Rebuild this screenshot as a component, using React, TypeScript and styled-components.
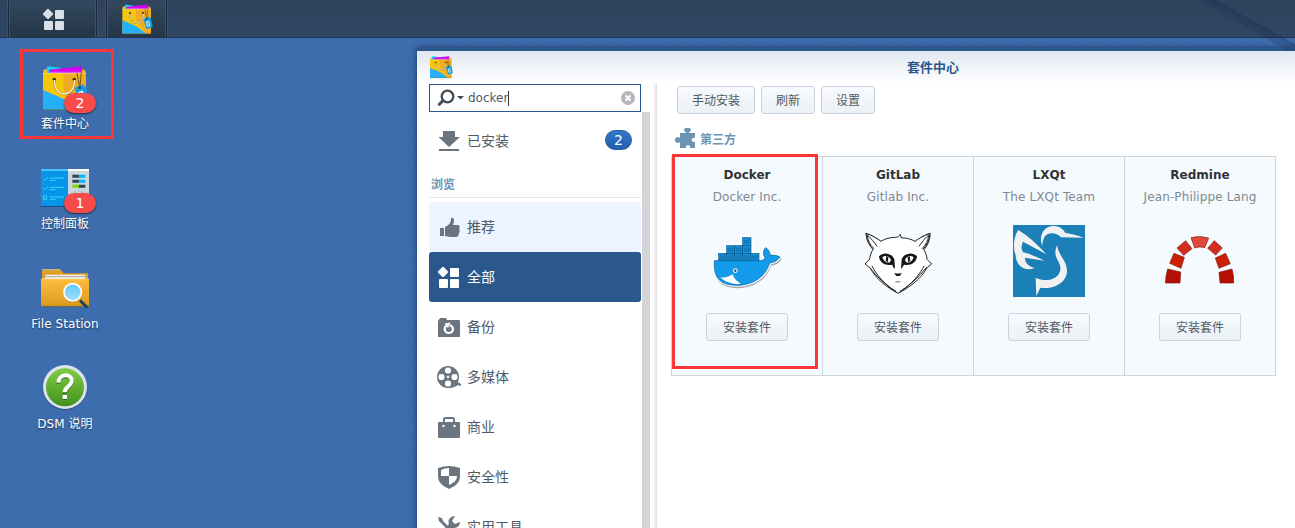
import React from "react";
import styled, { createGlobalStyle } from "styled-components";

const GlobalStyle = createGlobalStyle`
  * { box-sizing: border-box; }
  html, body { margin: 0; padding: 0; overflow: hidden; }
  body { font-family: "DejaVu Sans", "Noto Sans CJK SC", sans-serif; font-size: 12px; }
  svg { display: block; flex: none; }
`;

const Screen = styled.div`
  position: relative;
  width: 1295px;
  height: 528px;
  overflow: hidden;
  display: flex;
  flex-direction: column;
  background-color: #3f6fb0;
  background-image:
    repeating-linear-gradient(45deg, rgba(20, 50, 100, 0.05) 0 1px, transparent 1px 3px),
    repeating-linear-gradient(-45deg, rgba(20, 50, 100, 0.05) 0 1px, transparent 1px 3px);
`;

const Streak = styled.svg`
  position: absolute;
  top: 0;
  right: 0;
`;

const Taskbar = styled.header`
  position: relative;
  flex: none;
  height: 38px;
  padding-left: 8px;
  display: flex;
  gap: 9px;
  background: linear-gradient(#2e425c, #2f4763);
  border-bottom: 1px solid #24364f;
`;

const TaskButton = styled.div<{ $width: number; $shift?: number }>`
  width: ${(p) => p.$width}px;
  height: 37px;
  padding-left: ${(p) => p.$shift ?? 0}px;
  display: flex;
  align-items: center;
  justify-content: center;
  background: linear-gradient(#33485f, #243648);
  border: solid #1b2a3b;
  border-width: 0 1px;
  box-shadow: inset 1px 0 #3d5268, inset -1px 0 #3d5268, 1px 0 #3d5268, -1px 0 #3d5268;
`;

const Workspace = styled.main`
  flex: 1;
  min-height: 0;
  display: flex;
`;

const Desktop = styled.nav`
  flex: none;
  width: 417px;
  padding: 11px 0 0 20px;
  display: flex;
  flex-direction: column;
`;

const Shortcut = styled.div<{ $marked?: boolean }>`
  width: 94px;
  height: 90px;
  margin-bottom: 10px;
  padding-top: 12px;
  display: flex;
  flex-direction: column;
  align-items: center;
  border: 3px solid ${(p) => (p.$marked ? "#fb3638" : "transparent")};
  margin-right: auto;
`;

const ShortcutIcon = styled.div`
  position: relative;
  margin-left: -4px;
`;

const ShortcutLabel = styled.span`
  margin: 4px 0 0 -4px;
  line-height: 16px;
  letter-spacing: 0.06px;
  color: #fff;
  white-space: nowrap;
  text-shadow: 0 1px 2px rgba(0, 0, 0, 0.55);
`;

const Alert = styled.span`
  position: absolute;
  left: 23px;
  top: 29px;
  width: 32px;
  height: 20px;
  border-radius: 10px;
  background: #fa4b4b;
  color: #fff;
  font-size: 14px;
  line-height: 20px;
  text-align: center;
  box-shadow: 0 1px 2px rgba(0, 0, 0, 0.6);
`;

const Window = styled.section`
  flex: none;
  width: 1032px;
  height: 490px;
  margin-top: 10px;
  display: flex;
  flex-direction: column;
  background: #fff linear-gradient(#e0e7f1, #fff) 0 3px / 100% 32px no-repeat;
  border-top: 3px solid #2a588c;
  background-origin: border-box;
  box-shadow: 0 0 6px rgba(0, 15, 50, 0.65);
`;

const TitleBar = styled.div`
  flex: none;
  height: 33px;
  padding: 4px 12px 0;
  display: flex;
`;

const Title = styled.h1`
  flex: 1;
  margin: 0 24px 0 0;
  font-size: 13px;
  line-height: 25px;
  text-align: center;
  color: #2a588c;
`;

const Columns = styled.div`
  flex: 1;
  min-height: 0;
  display: flex;
`;

const Sidebar = styled.aside`
  flex: none;
  width: 212px;
  margin-left: 12px;
  display: flex;
  flex-direction: column;
`;

const Search = styled.div`
  flex: none;
  height: 28px;
  padding: 0 5px 0 7px;
  display: flex;
  align-items: center;
  border: 1px solid #2a588c;
  background: #fff;
  color: #505a64;
`;

const Query = styled.span`
  border-right: 1px solid #333;
  margin-left: 4px;
  line-height: 15px;
`;

const Clear = styled.span`
  margin-left: auto;
  display: flex;
`;

const Item = styled.div<{ $state?: "hover" | "active" }>`
  flex: none;
  height: 50px;
  padding: 0 9px 0 8px;
  display: flex;
  align-items: center;
  gap: 6px;
  border-radius: 3px;
  font-size: 14px;
  background: ${(p) => (p.$state === "active" ? "#2a588c" : p.$state === "hover" ? "#ecf5ff" : "transparent")};
  color: ${(p) => (p.$state === "active" ? "#fff" : "#505a64")};
`;

const ItemLabel = styled.span`
  padding-bottom: 2px;
`;

const InstalledItem = styled(Item)`
  margin-top: 3px;

  ${ItemLabel} {
    padding-bottom: 0;
  }
`;

const Count = styled.span`
  margin-left: auto;
  width: 27px;
  height: 20px;
  border-radius: 10px;
  background: linear-gradient(#3277c8, #245fae);
  border: 1px solid #2460a8;
  color: #fff;
  font-size: 14px;
  line-height: 18px;
  text-align: center;
`;

const Group = styled.h2`
  flex: none;
  height: 33px;
  margin: 0 0 4px;
  padding: 8px 0 0 2px;
  font-size: 12px;
  line-height: 24px;
  color: #6c94b2;
  border-bottom: 1px solid #e4e9ee;
`;

const Scrollbar = styled.div`
  flex: none;
  width: 8px;
  margin: 28px 0 0 1px;
  background: #d3d4d6;
`;

const Divider = styled.div`
  flex: none;
  width: 5px;
  margin-left: 3px;
  background: linear-gradient(90deg, #fff, #dedfe1 75%, #fff 80%);
`;

const Content = styled.div`
  flex: none;
  width: 605px;
  margin-left: 13px;
  padding-top: 2px;
`;

const Toolbar = styled.div`
  display: flex;
  gap: 6px;
  padding-left: 6px;
`;

const Button = styled.button<{ $width: number }>`
  width: ${(p) => p.$width}px;
  height: 28px;
  padding: 0 0 1px;
  border: 1px solid #c8d3df;
  border-radius: 3px;
  background: linear-gradient(#f7fafe, #ecf1f6);
  color: #505a64;
  font: inherit;
`;

const Category = styled.h2`
  height: 20px;
  margin: 14px 0 8px 4px;
  display: flex;
  align-items: center;
  gap: 5px;
  font-size: 12px;
  font-weight: 700;
  color: #6c94b2;
`;

const Grid = styled.div`
  position: relative;
  display: grid;
  grid-template-columns: repeat(4, 151px);
  height: 220px;
  border: solid #d0d5da;
  border-width: 1px 0 1px 1px;
`;

const Card = styled.article`
  display: flex;
  flex-direction: column;
  align-items: center;
  background: #f5faff;
  border-right: 1px solid #d0d5da;
`;

const Name = styled.h3`
  margin: 9px 0 0;
  font-size: 12px;
  line-height: 18px;
  color: #333;
`;

const Vendor = styled.p`
  margin: 4px 0 19px;
  line-height: 18px;
  letter-spacing: 0.12px;
  color: #808890;
  white-space: nowrap;
`;

const Install = styled(Button)`
  margin-top: 16px;
`;

const Highlight = styled.div`
  position: absolute;
  left: 0;
  top: -3px;
  width: 146px;
  height: 215px;
  border: 3px solid #fb3638;
`;

const grey = "#6b7580";

function Bag({ size }: { size: number }) {
  return (
    <svg width={size} height={size} viewBox="123 192 144 144">
      <path d="M131 209l8-2 9 14h-19z" fill="#eec22c" />
      <path d="M143 199l40 5-3 18h-36l-4-14z" fill="#14d4f0" />
      <path d="M148 209l97-10v25h-97z" fill="#d400f5" />
      <path d="M148 215h97v6h-97z" fill="#e8e0f4" opacity=".4" />
      <path d="M246 208l9 2 3 12h-12z" fill="#e9b331" />
      <path d="M129 220h129v110H129z" fill="#f5c60a" />
      <path d="M190 220h68v110h-20l-48-60z" fill="#f0aa25" />
      <path d="M129 270v60h109l-48-34z" fill="#25b0fb" />
      <path d="M129 221h129" stroke="#ffe46a" strokeWidth="2" />
      <path d="M129 329h129" stroke="#7d6c25" strokeWidth="2" />
      <circle cx="163" cy="238" r="5" fill="#352a10" />
      <circle cx="223" cy="238" r="5" fill="#352a10" />
      <path d="M163 242c-1 53 61 55 61 0" fill="none" stroke="#806020" strokeWidth="6" />
      <path d="M163 240c-1 55 61 57 61 0" fill="none" stroke="#fff4c8" strokeWidth="4.500" />
      <path d="M231 219l8 45M244 219l-5 45" stroke="#765711" strokeWidth="3" />
      <path d="M224 264l22-11 12 9 8 38-28 9z" fill="#109ee1" />
      <path d="M238 277l9-3 5 20-10 2z" fill="none" stroke="#fff" strokeWidth="4" />
      <circle cx="239" cy="263" r="4" fill="#173f52" />
    </svg>
  );
}

function ControlPanel() {
  return (
    <svg width="48" height="48" viewBox="0 -6 144 144">
      <path d="M0 117h80l64-4v6L80 123H0z" fill="#193b60" opacity=".7" />
      <path d="M80 9h64v108H80z" fill="#cbd6df" />
      <path d="M80 9h64v6H80z" fill="#fff" />
      <path d="M0 9h81v111H0z" fill="#0795e8" />
      <path d="M0 9h81v6H0z" fill="#45c4ff" />
      <path d="M7 38l5 5 9-10M7 66l5 5 9-10M7 90h10v10H7zM26 36h43M26 43h18M26 64h43M26 71h18M26 93h43M26 100h18" fill="none" stroke="#3fd4fa" strokeWidth="3" />
      <path d="M94 26h20v9H94zM94 41h20v9H94zM112 56h21v9h-21z" fill="#334450" />
      <path d="M113 26h20v9h-20zM113 41h20v9h-20z" fill="#00b8f2" />
      <path d="M94 56h20v9H94z" fill="#78da00" />
      <path d="M101 78h4M112 75h3M122 78h4" stroke="#84919a" strokeWidth="3" />
    </svg>
  );
}

function FileFolder() {
  return (
    <svg width="48" height="48" viewBox="0 -3 144 144">
      <defs>
        <linearGradient id="folder" x2="0" y2="1"><stop stopColor="#fdbd3e" /><stop offset="1" stopColor="#dc991e" /></linearGradient>
        <linearGradient id="glass" x2="0" y2="1"><stop stopColor="#62c9fa" /><stop offset="1" stopColor="#a1e0ff" /></linearGradient>
      </defs>
      <path d="M3 17l3-4h51l11 12h73v25H3z" fill="#dfa026" />
      <path d="M4 14h53" stroke="#c5ba91" strokeWidth="3" />
      <path d="M13 29h120v18H9z" fill="#f4f4f0" />
      <path d="M10 35h124" stroke="#7f7a70" strokeWidth="2" />
      <path d="M0 42h144v82H0z" fill="url(#folder)" />
      <path d="M0 42h144" stroke="#ffd47a" strokeWidth="2" />
      <path d="M0 124h144" stroke="#765d2a" strokeWidth="2" />
      <path d="M117 106l22 22" stroke="#194659" strokeWidth="9" />
      <circle cx="96" cy="84" r="28" fill="#9b701e" opacity=".45" />
      <circle cx="95" cy="82" r="26" fill="url(#glass)" stroke="#fff" strokeWidth="5" />
    </svg>
  );
}

function Help() {
  return (
    <svg width="48" height="48" viewBox="0 2 144 144">
      <defs><linearGradient id="help" x2="0" y2="1"><stop stopColor="#83cb46" /><stop offset="1" stopColor="#41921d" /></linearGradient></defs>
      <circle cx="72" cy="74" r="66" fill="#1c3962" opacity=".7" />
      <circle cx="72" cy="71" r="66" fill="#dce3ee" />
      <circle cx="72" cy="72" r="57" fill="url(#help)" />
      <path d="M52 61c2-29 41-28 40-5-1 17-21 17-21 35M65 104h13" fill="none" stroke="#27651b" strokeWidth="12" />
      <path d="M52 58c2-29 41-28 40-5-1 17-21 17-21 34M65 101h13" fill="none" stroke="#fff" strokeWidth="12" />
    </svg>
  );
}

function Tiles({ size = 24, fill = "#fff" }: { size?: number; fill?: string }) {
  return (
    <svg width={size} height={size} viewBox="0 0 24 24" fill={fill}>
      <rect x="2" y="3" width="8" height="8" rx="1.2" transform="rotate(45 6 7)" />
      <rect x="13" y="3" width="9" height="9" rx="1" />
      <rect x="2" y="14" width="9" height="9" rx="1" />
      <rect x="13" y="14" width="9" height="9" rx="1" />
    </svg>
  );
}

type SideIconName = "download" | "thumb" | "tiles" | "backup" | "film" | "case" | "shield" | "tools";

function SideIcon({ name }: { name: SideIconName }) {
  if (name === "tiles") return <Tiles />;
  return (
    <svg width="24" height="24" viewBox="0 0 24 24" fill={grey}>
      {name === "download" && <path d="M6 3h12v6h5L12 19 1.500 9H6zM2 21h20v2H2z" />}
      {name === "thumb" && <path d="M3 13h4v8H3zM8 12c4-2 6-4 6-9 3-1 4 2 2 7h5c2 0 2 3 1 4 1 1 1 3 0 4 0 2-1 4-3 4h-6c-2 0-3-1-5-1z" />}
      {name === "backup" && (
        <>
          <path d="M1 6l2-3h6l1 2h12c1 0 1 1 1 2v15H1z" />
          <path d="M9.300 10.500c-4 4 0 8 3 7.500 4-.5 5.500-6 .5-7.800" fill="none" stroke="#fff" strokeWidth="2.100" />
          <path d="M7.500 8.500l6-1-2.500 5.500z" fill="#fff" />
        </>
      )}
      {name === "film" && (
        <>
          <path d="M17 19l4-2 3 2v2l-3-1c-3 2-5 3-10 3z" />
          <circle cx="11" cy="12" r="11" />
          <g fill="#fff"><circle cx="11" cy="5.500" r="3.100" /><circle cx="11" cy="18.500" r="3.100" /><circle cx="4.500" cy="12" r="3.100" /><circle cx="17.500" cy="12" r="3.100" /><circle cx="11" cy="12" r="1.200" /></g>
        </>
      )}
      {name === "case" && (
        <>
          <path d="M6 7V4c0-1 1-2 2-2h8c1 0 2 1 2 2v3h-2V4H8v3z" />
          <rect x="1" y="7" width="22" height="16" rx="1" />
          <g fill="#fff"><circle cx="6.5" cy="11" r="1.2" /><circle cx="17.5" cy="11" r="1.2" /></g>
        </>
      )}
      {name === "shield" && (
        <>
          <path d="M1 3q11-4 22 0v8c0 7-5 10-11 13C6 21 1 18 1 11z" />
          <path d="M4 5q4-2 8-2v8H4zM12 11h8c0 5-4 7-8 9z" fill="#fff" />
        </>
      )}
      {name === "tools" && (
        <>
          <path d="M1 2l4 1 1 3 5 5-2 2-5-5-2-2z" />
          <path d="M23 7l-5 2-3-3 3-5c-4 0-8 4-6 8L2 19l4 4L16 13c4 0 7-2 7-6z" />
          <path d="M14 14l3-2 6 8-4 4z" />
        </>
      )}
    </svg>
  );
}

function Magnifier() {
  return (
    <svg width="18" height="18" viewBox="0 0 18 18" fill="none" stroke="#414b55">
      <circle cx="10.5" cy="7.500" r="5.800" strokeWidth="2.300" />
      <path d="M6 11.500l-4.500 4.700" strokeWidth="3" />
    </svg>
  );
}

function Puzzle() {
  return (
    <svg width="20" height="20" viewBox="0 0 20 20" fill="#6c94b2">
      <path d="M5 5h6c0-1-2-2-2-3 0-3 7-3 7 0 0 1-2 2-2 3h6v5c-4-2-5 5 0 4v6h-5c1-4-5-4-4 0H5v-6c-2 2-5 1-5-2s3-4 5-2z" />
    </svg>
  );
}

function DockerLogo() {
  const rows = [
    { y: 265, xs: [235] },
    { y: 289, xs: [187, 211, 235] },
    { y: 312, xs: [163, 187, 211, 235, 259] },
  ];
  const hull = "M150 334h131c13 0 18-2 21-9-7-9-6-23 2-30 9 5 14 14 13 23 10-2 20 0 30 5-8 12-19 17-31 18-12 40-48 67-98 67-52 0-71-24-68-74z";
  return (
    <svg width="72" height="72" viewBox="140 227 216 216">
      <g transform="translate(2 6)" fill="#68717a" stroke="#68717a" strokeWidth="5" opacity=".6"><path d={hull} /></g>
      <path d={`${hull}M162 334v-23h24v-23h48v-24h27v47h24v23z`} fill="#fff" stroke="#fff" strokeWidth="9" strokeLinejoin="round" />
      {rows.map((r) => r.xs.map((x) => (
        <g key={`${x}-${r.y}`}>
          <rect x={x} y={r.y} width="25" height="23" fill="#168ed0" stroke="#07588c" strokeWidth="2" />
          <path d={`M${x + 7} ${r.y + 6}v12M${x + 12.5} ${r.y + 6}v12M${x + 18} ${r.y + 6}v12`} stroke="#075f9c" strokeWidth="2" />
        </g>
      )))}
      <path d={hull} fill="#129aeb" stroke="#075a91" strokeWidth="2" />
      <path d="M168 384c15 2 26-2 37-9 3 12 11 20 24 28-24 3-46-4-61-19z" fill="#fff" />
      <circle cx="213" cy="364" r="7" fill="#e6f5ff" />
      <circle cx="213" cy="364" r="3.500" fill="#333" />
    </svg>
  );
}

function FoxHalf() {
  return (
    <g>
      <path d="M624 298c-11-12-20-28-21-48 20 7 33 16 44 23" />
      <path d="M605 253c11 9 26 28 31 36M607 256c2 17 8 29 20 40" />
      <path d="M621 348c9 20 37 56 73 77M613 352c22 27 50 54 80 73" />
      <path d="M642 319c12-15 39-10 46 9l2 28c-5-3-6-8-9-12-17 4-38-4-39-25z" fill="#171717" stroke="none" />
      <path d="M652 322c8-7 20-4 26 7-2 14-20 11-26-7z" fill="#fff" stroke="none" />
      <path d="M664 318l6 4-1 14-7-3z" fill="#171717" stroke="none" />
    </g>
  );
}

function GitLabLogo() {
  return (
    <svg width="72" height="72" viewBox="591 225 216 216" fill="#fff" stroke="#262626" strokeWidth="3">
      <path d="M603 250c20 6 35 17 44 24 14-8 29-12 45-12 6 0 12-4 13-9 2 2 3 7 3 10 16 1 31 4 44 12 10-9 24-20 43-25 1 18-7 36-18 49 5 10 9 20 9 29l14 14-15 12c-15 31-51 58-86 76-32-17-68-44-83-76l-16-12 14-15c1-10 5-20 10-29-12-14-20-28-21-48z" />
      <FoxHalf />
      <g transform="matrix(-1 0 0 1 1398 0)"><FoxHalf /></g>
      <path d="M687 369q12 3 24 0l-7 9h-10z" fill="#171717" stroke="none" />
      <path d="M691 396q8-2 15 0" strokeWidth="2" />
    </svg>
  );
}

function LxqtLogo() {
  return (
    <svg width="72" height="72" viewBox="129 225 216 216" fill="#f0f1f2">
      <path d="M129 225h216v216H129z" fill="#1b80b7" />
      <path d="M217 288c-12-31 5-60 33-60 16 0 29 8 36 21 18 2 36 7 54 14l-67-1c-14-16-42-16-50 0-4 8-6 15-6 26z" />
      <path d="M261 286c5 32 30 45 30 77 0 31-35 57-80 50l-12 25-2-55c31 15 70 5 74-24 3-27-26-34-10-73z" />
      <path fillRule="evenodd" d="M145 240c31 19 57 43 84 73l-70-38c-6 13-5 23 0 32 22 5 42 14 64 25l-58-9c-1 14 10 27 29 31-28 12-56-5-57-38-8-21-8-53 8-76z" />
    </svg>
  );
}

function RedmineLogo() {
  return (
    <svg width="72" height="72" viewBox="582 225 216 216" stroke="#85180f" strokeWidth="2">
      <path d="M663 263q25-8 53 1l-12 29q-15-5-30 1z" fill="#df4939" />
      <g fill="#d22c1b"><path d="M647 272l-26 22 20 22 25-20zM733 272l24 22-20 21-24-20z" /></g>
      <g fill="#cc2005"><path d="M612 310l31 12-10 33-34-15zM767 310l14 31-34 14-11-31z" /></g>
      <g fill="#b31003"><path d="M593 357l39 9-2 33h-44q1-22 7-42zM786 357q6 19 5 42h-41l-3-32z" /></g>
    </svg>
  );
}

const shortcuts = [
  { label: "套件中心", icon: <Bag size={48} />, alert: 2, marked: true },
  { label: "控制面板", icon: <ControlPanel />, alert: 1 },
  { label: "File Station", icon: <FileFolder /> },
  { label: "DSM 说明", icon: <Help /> },
];

const categories: { label: string; icon: SideIconName; state?: "hover" | "active" }[] = [
  { label: "推荐", icon: "thumb", state: "hover" },
  { label: "全部", icon: "tiles", state: "active" },
  { label: "备份", icon: "backup" },
  { label: "多媒体", icon: "film" },
  { label: "商业", icon: "case" },
  { label: "安全性", icon: "shield" },
  { label: "实用工具", icon: "tools" },
];

const packages = [
  { name: "Docker", vendor: "Docker Inc.", logo: <DockerLogo /> },
  { name: "GitLab", vendor: "Gitlab Inc.", logo: <GitLabLogo /> },
  { name: "LXQt", vendor: "The LXQt Team", logo: <LxqtLogo /> },
  { name: "Redmine", vendor: "Jean-Philippe Lang", logo: <RedmineLogo /> },
];

export default function App() {
  return (
    <>
      <GlobalStyle />
      <Screen>
        <Taskbar>
          <TaskButton $width={89} $shift={3}><Tiles fill="#d9e0e8" /></TaskButton>
          <TaskButton $width={61}><Bag size={32} /></TaskButton>
        </Taskbar>
        <Streak width="100" height="50" viewBox="0 0 100 50">
          <path d="M5 0h15l80 44v6h-9z" fill="#15294f" opacity=".22" />
          <path d="M20 0l80 44v3L14 0z" fill="#15294f" opacity=".12" />
        </Streak>
        <Workspace>
          <Desktop>
            {shortcuts.map((s) => (
              <Shortcut key={s.label} $marked={s.marked}>
                <ShortcutIcon>
                  {s.icon}
                  {s.alert && <Alert>{s.alert}</Alert>}
                </ShortcutIcon>
                <ShortcutLabel>{s.label}</ShortcutLabel>
              </Shortcut>
            ))}
          </Desktop>
          <Window>
            <TitleBar>
              <Bag size={24} />
              <Title>套件中心</Title>
            </TitleBar>
            <Columns>
              <Sidebar>
                <Search>
                  <Magnifier />
                  <svg width="9" height="6" viewBox="0 0 9 6"><path d="M2 1h7L5.500 4.500z" fill="#414b55" /></svg>
                  <Query>docker</Query>
                  <Clear>
                    <svg width="14" height="14" viewBox="0 0 14 14">
                      <circle cx="7" cy="7" r="7" fill="#b4b8bc" />
                      <path d="M4.500 4.500l5 5M9.500 4.500l-5 5" stroke="#fff" strokeWidth="2" />
                    </svg>
                  </Clear>
                </Search>
                <InstalledItem>
                  <SideIcon name="download" />
                  <ItemLabel>已安装</ItemLabel>
                  <Count>2</Count>
                </InstalledItem>
                <Group>浏览</Group>
                {categories.map((c) => (
                  <Item key={c.label} $state={c.state}>
                    <SideIcon name={c.icon} />
                    <ItemLabel>{c.label}</ItemLabel>
                  </Item>
                ))}
              </Sidebar>
              <Scrollbar />
              <Divider />
              <Content>
                <Toolbar>
                  <Button $width={78}>手动安装</Button>
                  <Button $width={54}>刷新</Button>
                  <Button $width={54}>设置</Button>
                </Toolbar>
                <Category><Puzzle />第三方</Category>
                <Grid>
                  {packages.map((p) => (
                    <Card key={p.name}>
                      <Name>{p.name}</Name>
                      <Vendor>{p.vendor}</Vendor>
                      {p.logo}
                      <Install $width={82}>安装套件</Install>
                    </Card>
                  ))}
                  <Highlight />
                </Grid>
              </Content>
            </Columns>
          </Window>
        </Workspace>
      </Screen>
    </>
  );
}
